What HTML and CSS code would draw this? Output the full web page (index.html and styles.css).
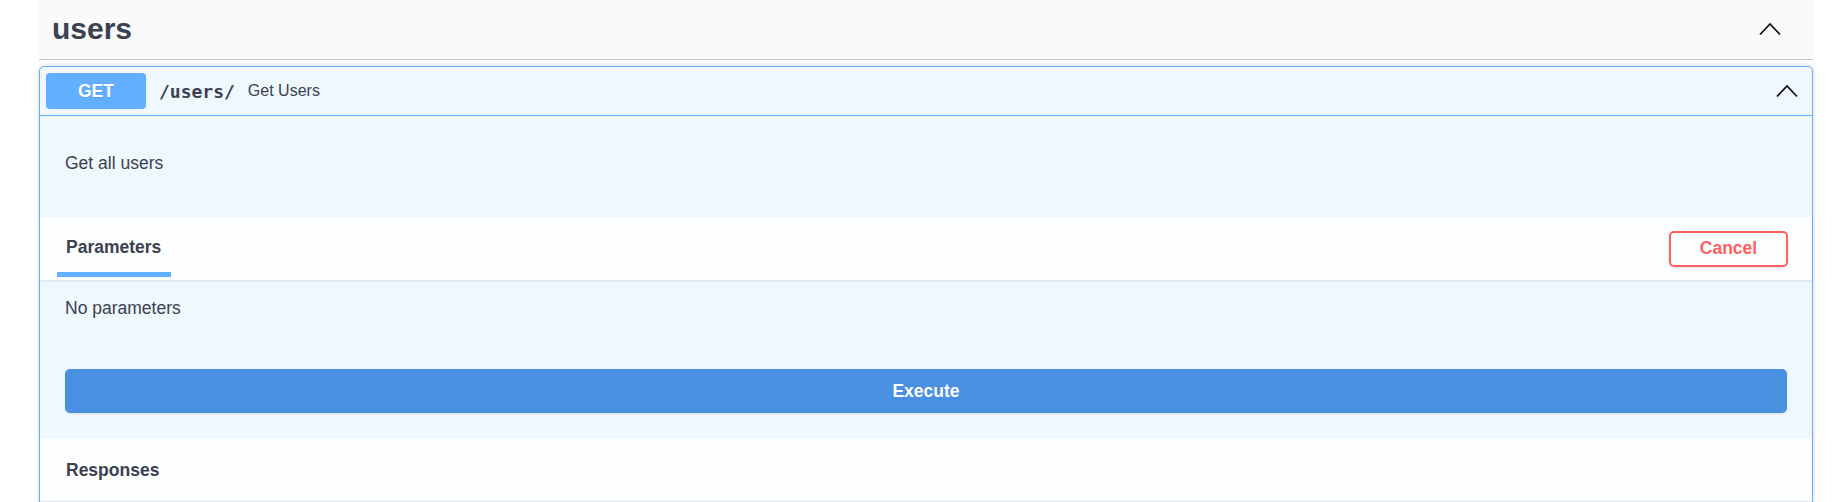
FILE: index.html
```html
<!DOCTYPE html>
<html>
<head>
<meta charset="utf-8">
<link rel="stylesheet" href="styles.css">
</head>
<body>
<div class="wrapper">
  <div class="tag">
    <h3 class="tag-title">users</h3>
    <svg class="arrow" width="24" height="14" viewBox="0 0 24 14"><polyline points="2,12.5 12,2 22,12.5" fill="none" stroke="#111" stroke-width="1.8"/></svg>
  </div>
  <div class="opblock">
    <div class="summary">
      <span class="method">GET</span>
      <span class="path">/users/</span>
      <span class="desc">Get Users</span>
      <svg class="arrow op-arrow" width="24" height="14" viewBox="0 0 24 14"><polyline points="2,12.5 12,2 22,12.5" fill="none" stroke="#111" stroke-width="1.8"/></svg>
    </div>
    <div class="body">
      <div class="description"><p>Get all users</p></div>
      <div class="section-header">
        <div class="tab"><span class="tab-label">Parameters</span></div>
        <button class="cancel">Cancel</button>
      </div>
      <div class="params-body">
        <p>No parameters</p>
        <div class="execute-wrapper"><button class="execute">Execute</button></div>
      </div>
      <div class="section-header responses">
        <span class="tab-label">Responses</span>
      </div>
      <div class="responses-body"></div>
    </div>
  </div>
</div>
</body>
</html>
```
FILE: styles.css
```css
* { box-sizing: border-box; }
html, body { margin: 0; padding: 0; background: #fff; }
body { font-family: "Liberation Sans", Arial, sans-serif; color: #3b4151; }
.wrapper { margin: 0 32px 0 39px; width: 1774px; }
.tag {
  display: flex; align-items: center; justify-content: space-between;
  background: #fafafa;
  border-bottom: 1px solid #c4c6cb;
  padding: 11px 31px 13px 13px;
  height: 60px;
}
.tag-title { margin: 0; font-size: 30px; line-height: 35px; font-weight: 700; color: #3b4151; }
.arrow { display: block; }
.opblock {
  margin-top: 6px;
  border: 1px solid #61affe;
  border-radius: 5px;
  background: #eff7ff;
  box-shadow: 0 0 4px rgba(0,0,0,.19);
  overflow: hidden;
}
.summary {
  display: flex; align-items: center;
  padding: 6px;
  border-bottom: 1px solid #61affe;
  height: 49px;
}
.method {
  width: 100px; height: 36px; line-height: 36px; text-align: center;
  background: #61affe; color: #fff; font-weight: 700; font-size: 17.5px;
  border-radius: 4px; text-shadow: 0 1px 0 rgba(0,0,0,.1);
}
.path {
  font-family: "DejaVu Sans Mono", "Liberation Mono", monospace;
  font-weight: 700; font-size: 18px; color: #3b4151;
  padding: 0 13px 0 13px;
}
.desc { font-size: 16px; color: #3b4151; flex: 1; }
.op-arrow { margin-right: 7px; }
.description { padding: 37px 25px 0; height: 101px; }
.description p { margin: 0; font-size: 17.5px; line-height: 20px; }
.section-header {
  display: flex; align-items: center; justify-content: space-between;
  background: rgba(255,255,255,.8);
  box-shadow: 0 1px 2px rgba(0,0,0,.1);
  height: 63px;
  padding: 0 24px 0 26px;
  position: relative;
}
.tab { position: relative; height: 63px; display: flex; align-items: center; }
.tab-label { font-size: 17.5px; font-weight: 700; color: #3b4151; line-height: 20px; }
.tab::after {
  content: ""; position: absolute; left: 50%; transform: translateX(-50%);
  width: 114px; height: 5px; background: #61affe; bottom: 3px;
}
.tab .tab-label { margin-top: -3px; }
.cancel {
  width: 119px; height: 36px;
  border: 2px solid #ff6060; border-radius: 5px; background: transparent;
  color: #ff6060; font-family: "Liberation Sans", Arial, sans-serif;
  font-weight: 700; font-size: 17.5px;
  box-shadow: 0 1px 2px rgba(0,0,0,.1);
}
.params-body { padding: 18px 25px 25px; }
.params-body p { margin: 0; font-size: 17.5px; line-height: 20px; }
.execute-wrapper { margin-top: 51px; }
.execute {
  display: block; width: 100%; height: 44px;
  background: #4990e2; color: #fff; border: none; border-radius: 5px;
  font-family: "Liberation Sans", Arial, sans-serif;
  font-weight: 700; font-size: 17.5px;
  box-shadow: 0 1px 2px rgba(0,0,0,.1);
}
.responses .tab-label { margin-top: 1px; }
.responses-body { height: 120px; }
```
